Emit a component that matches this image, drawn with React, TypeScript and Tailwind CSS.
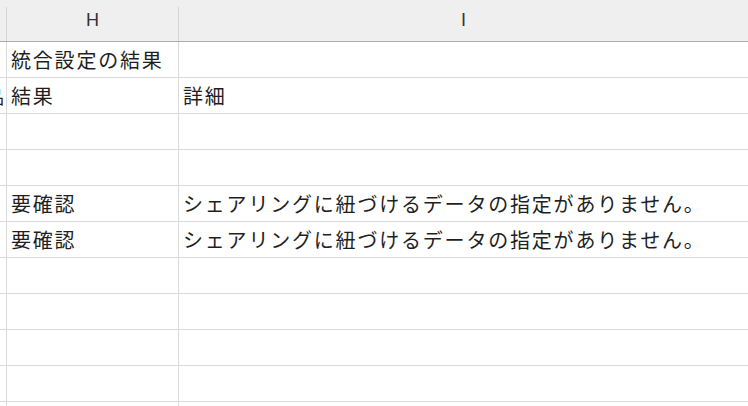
import React from "react";

const rows: { h: string; i: string; g?: string }[] = [
  { h: "統合設定の結果", i: "" },
  { h: "結果", i: "詳細", g: "品" },
  { h: "", i: "" },
  { h: "", i: "" },
  { h: "要確認", i: "シェアリングに紐づけるデータの指定がありません。" },
  { h: "要確認", i: "シェアリングに紐づけるデータの指定がありません。" },
  { h: "", i: "" },
  { h: "", i: "" },
  { h: "", i: "" },
  { h: "", i: "" },
  { h: "", i: "" },
];

const cellFont = {
  fontFamily: '"Noto Sans CJK JP", "Noto Sans", sans-serif',
};

export default function App() {
  return (
    <div className="w-[748px] h-[406px] overflow-hidden bg-white">
      {/* header */}
      <div className="flex h-[42px] bg-[#efefef] border-b border-[#ababab]">
        <div className="w-[7px] flex justify-end">
          <div className="w-px self-end h-[34px] bg-[#d4d4d4]" />
        </div>
        <div className="w-[172px] flex">
          <div className="flex-1 pt-[7px] text-center text-[18px] text-[#333] font-['Liberation_Sans',sans-serif]">H</div>
          <div className="w-px self-end h-[34px] bg-[#d4d4d4]" />
        </div>
        <div className="flex-1 flex">
          <div className="flex-1 pt-[7px] text-center text-[18px] text-[#333] font-['Liberation_Sans',sans-serif]">I</div>
        </div>
      </div>
      {rows.map((r, idx) => (
        <div key={idx} className="flex h-[36px] border-b border-[#dadada]">
          <div className="w-[7px] border-r border-[#dadada] overflow-hidden relative">
            {r.g ? (
              <span
                className="absolute right-[2px] top-[5px] text-[18px] leading-[26px] text-[#1f1f1f]"
                style={cellFont}
              >
                {r.g}
              </span>
            ) : null}
          </div>
          <div
            className="w-[172px] border-r border-[#dadada] pl-[4px] flex items-center text-[20px] tracking-[1.8px] text-[#1f1f1f] whitespace-nowrap"
            style={cellFont}
          >
            {r.h}
          </div>
          <div
            className="flex-1 pl-[4px] flex items-center text-[20px] tracking-[1.8px] text-[#1f1f1f] whitespace-nowrap"
            style={cellFont}
          >
            {r.i}
          </div>
        </div>
      ))}
    </div>
  );
}
